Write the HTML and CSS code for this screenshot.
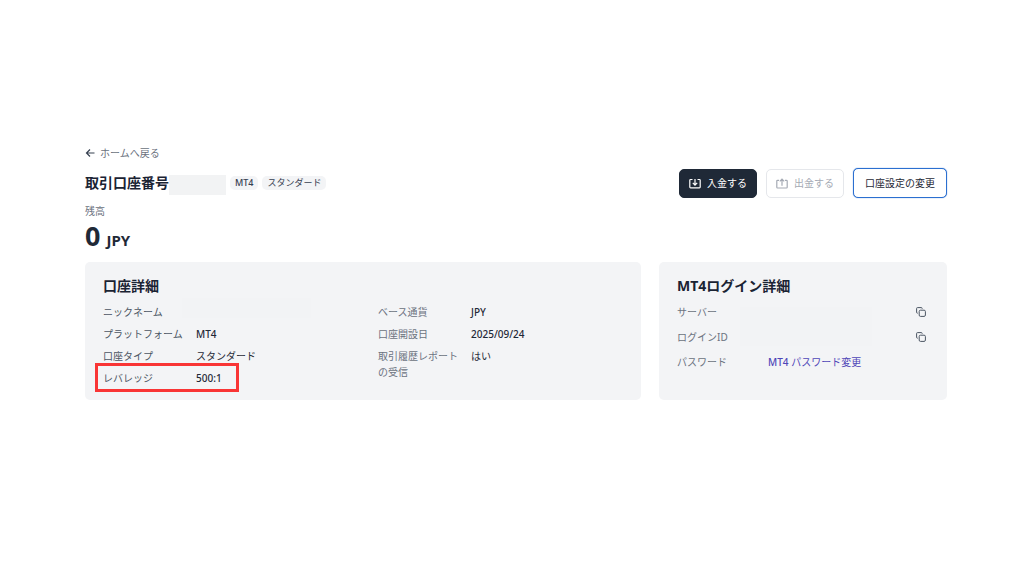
FILE: index.html
```html
<!DOCTYPE html>
<html lang="ja">
<head>
    <meta charset="UTF-8">
    <meta name="viewport" content="width=device-width, initial-scale=1.0">
    <title>取引口座</title>
    <link rel="stylesheet" href="styles.css">
</head>
<body>
    <main>
        <a class="back" href="#">
            <svg width="10" height="10" viewBox="0 0 10 10"><path d="M9.5 5H1.5M5 1.5L1.5 5L5 8.5"/></svg>
            ホームへ戻る
        </a>

        <header class="account">
            <div class="title">
                <h1>取引口座番号</h1>
                <span class="number-mask"></span>
                <span class="badge latin">MT4</span>
                <span class="badge">スタンダード</span>
            </div>
            <div class="actions">
                <button type="button" class="btn btn-dark">
                    <svg width="12" height="11" viewBox="0 0 12 11"><path d="M3.5 1.5H1.6Q.8 1.5 .8 2.3V9Q.8 9.8 1.6 9.8H10.4Q11.2 9.8 11.2 9V2.3Q11.2 1.5 10.4 1.5H8.5M6 1V7M3.8 4.9L6 7.1L8.2 4.9"/></svg>
                    入金する
                </button>
                <button type="button" class="btn" disabled>
                    <svg width="12" height="11" viewBox="0 0 12 11"><path d="M3 2.3H1.6Q.8 2.3 .8 3.1V9.2Q.8 10 1.6 10H10.4Q11.2 10 11.2 9.2V3.1Q11.2 2.3 10.4 2.3H9M6 7.8V1.2M3.8 3.4L6 1.2L8.2 3.4"/></svg>
                    出金する
                </button>
                <button type="button" class="btn btn-outline">口座設定の変更</button>
            </div>
        </header>

        <p class="balance-label">残高</p>
        <p class="balance">0 <small>JPY</small></p>

        <div class="cards">
            <section class="card">
                <h2>口座詳細</h2>
                <div class="columns">
                    <dl class="dark-labels">
                        <div class="row"><dt>ニックネーム</dt><dd><span class="mask mask-name"></span></dd></div>
                        <div class="row"><dt>プラットフォーム</dt><dd class="latin">MT4</dd></div>
                        <div class="row"><dt>口座タイプ</dt><dd>スタンダード</dd></div>
                        <div class="row marked"><dt>レバレッジ</dt><dd class="latin">500:1</dd></div>
                    </dl>
                    <dl>
                        <div class="row"><dt>ベース通貨</dt><dd class="latin">JPY</dd></div>
                        <div class="row"><dt>口座開設日</dt><dd class="latin">2025/09/24</dd></div>
                        <div class="row"><dt>取引履歴レポートの受信</dt><dd>はい</dd></div>
                    </dl>
                </div>
            </section>

            <section class="card">
                <h2>MT4ログイン詳細</h2>
                <dl class="login">
                    <div class="row">
                        <dt>サーバー</dt>
                        <dd><span class="mask mask-login"></span></dd>
                        <dd class="copy-cell"><button type="button" class="copy" aria-label="サーバーをコピー">
                            <svg width="10" height="10" viewBox="0 0 10 10"><path d="M1.8 6.2H1.5Q.6 6.2 .6 5.3V1.5Q.6 .6 1.5 .6H5.3Q6.2 .6 6.2 1.5V1.8"/><rect x="3.2" y="3.2" width="6.2" height="6.2" rx="1.3"/></svg>
                        </button></dd>
                    </div>
                    <div class="row">
                        <dt>ログインID</dt>
                        <dd></dd>
                        <dd class="copy-cell"><button type="button" class="copy" aria-label="ログインIDをコピー">
                            <svg width="10" height="10" viewBox="0 0 10 10"><path d="M1.8 6.2H1.5Q.6 6.2 .6 5.3V1.5Q.6 .6 1.5 .6H5.3Q6.2 .6 6.2 1.5V1.8"/><rect x="3.2" y="3.2" width="6.2" height="6.2" rx="1.3"/></svg>
                        </button></dd>
                    </div>
                    <div class="row">
                        <dt>パスワード</dt>
                        <dd><a href="#"><span class="latin">MT4</span> パスワード変更</a></dd>
                    </div>
                </dl>
            </section>
        </div>
    </main>
</body>
</html>
```
FILE: styles.css
```css
*, *::after {
    margin: 0;
    padding: 0;
    box-sizing: border-box;
}

body {
    font-family: "Noto Sans", "Noto Sans CJK JP", sans-serif;
    font-size: 10px;
    line-height: 16px;
    color: #1f2937;
    background-color: #fff;
}

main {
    padding: 145px 77px 40px 85px;
}

svg {
    fill: none;
    stroke: currentColor;
    stroke-width: 1.2;
    flex: none;
}

button {
    font: inherit;
    cursor: pointer;
}

.latin {
    font-weight: 500;
}

.back {
    display: flex;
    align-items: center;
    gap: 5px;
    width: fit-content;
    color: #6b7280;
    text-decoration: none;
}

.back svg {
    color: #374151;
}

.account {
    display: flex;
    justify-content: space-between;
    align-items: center;
    margin-top: 7px;
}

.title {
    display: flex;
    align-items: center;
    gap: 4px;
}

h1, h2 {
    font-size: 14px;
    line-height: 20px;
    font-weight: 700;
    color: #1a2333;
}

h1 {
    margin-right: -4px;
}

.number-mask {
    width: 57px;
    height: 20px;
    margin-top: 4px;
    background-color: #f2f3f4;
}

.badge {
    padding: 0 5px;
    border-radius: 5px;
    background-color: #f3f4f6;
    font-size: 9px;
    line-height: 14px;
    color: #374151;
}

.actions {
    display: flex;
    align-items: center;
    gap: 9px;
}

.btn {
    display: flex;
    align-items: center;
    gap: 6px;
    height: 29px;
    padding: 0 9px;
    border: 1px solid #e5e7eb;
    border-radius: 5px;
    background-color: #fff;
    color: #1f2937;
}

.btn:disabled {
    color: #a5aab4;
    cursor: default;
}

.btn-dark {
    border-color: #1f2937;
    background-color: #1f2937;
    color: #fff;
}

.btn-outline {
    height: 30px;
    padding: 0 11px;
    border-color: #2b6fd0;
    box-shadow: 0 0 1px #2b6fd0;
}

.balance-label {
    margin-top: 5px;
    color: #6b7280;
}

.balance {
    font-size: 27px;
    line-height: 34px;
    font-weight: 700;
}

.balance small {
    font-size: 15px;
    margin-left: -1px;
}

.cards {
    display: grid;
    grid-template-columns: 556fr 288fr;
    gap: 18px;
    margin-top: 5px;
}

.card {
    padding: 14px 18px;
    border-radius: 5px;
    background-color: #f3f4f6;
}

h2 {
    margin-bottom: 8px;
}

.columns {
    display: grid;
    grid-template-columns: 1fr 1fr;
    gap: 30px;
}

dl {
    display: flex;
    flex-direction: column;
    gap: 6px;
}

.row {
    position: relative;
    display: grid;
    grid-template-columns: 84px 1fr;
    gap: 9px;
}

dt {
    color: #6b7280;
}

.dark-labels dt {
    color: #4b5563;
}

/* red frame round the leverage row */
.marked::after {
    content: "";
    position: absolute;
    top: -7px;
    left: -8px;
    width: 144px;
    height: 29px;
    border: 3px solid #f93535;
}

.login {
    gap: 9px;
}

.login .row {
    grid-template-columns: 82px 1fr auto;
}

.login a {
    color: #4f46b8;
    text-decoration: none;
}

.copy-cell {
    display: flex;
    align-items: center;
    margin-right: 3px;
}

.copy {
    display: block;
    border: 0;
    background: none;
    color: #4b5563;
}

.copy svg {
    display: block;
    stroke-width: 1;
}

/* blanked-out account data */
.mask {
    position: absolute;
    background-color: #f2f3f5;
}

.mask-name {
    top: -6px;
    left: 79px;
    width: 129px;
    height: 20px;
}

.mask-login {
    top: 3px;
    left: 63px;
    width: 132px;
    height: 39px;
}
```
